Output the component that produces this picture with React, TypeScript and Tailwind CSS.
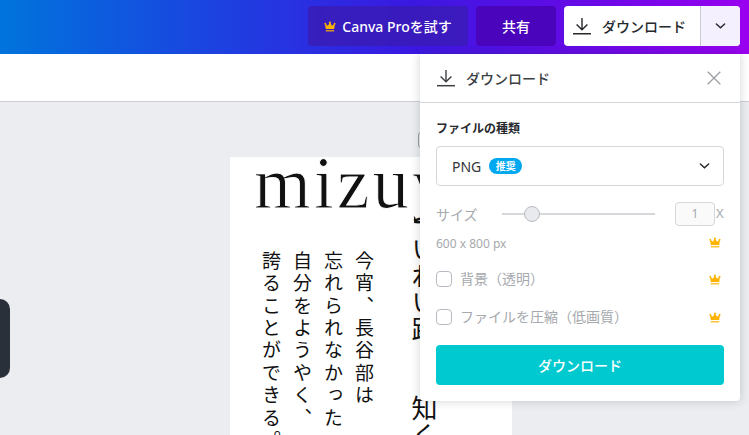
import React from 'react';

const jp = '[font-family:"Noto_Sans","Noto_Sans_CJK_JP",sans-serif]';

const DownloadIcon = ({ className }: { className?: string }) => (
  <svg viewBox="0 0 18 18" className={className} fill="none" stroke="currentColor" strokeWidth="1.4">
    <path d="M9 1v11.5M3.6 7.4 9 12.8l5.4-5.4" />
    <path d="M0 16.7h18" strokeWidth="1.5" />
  </svg>
);

const Chevron = ({ className }: { className?: string }) => (
  <svg viewBox="0 0 12 8" className={className} fill="none" stroke="currentColor" strokeWidth="1.6" strokeLinecap="round">
    <path d="M1.5 1.8 6 6l4.5-4.2" />
  </svg>
);

const Crown = () => (
  <svg viewBox="0 0 12 11" className="h-[11px] w-3 shrink-0" fill="#fdb300">
    <path d="M6 0.6a1 1 0 0 1 .6 1.8l1.5 2.3 1.7-1.5a.95.95 0 1 1 1 .5L10.2 8H1.8L1.1 3.7a.95.95 0 1 1 1-.5l1.7 1.5 1.5-2.3A1 1 0 0 1 6 .6z" />
    <path d="M1.8 9.2h8.4v1.2H1.8z" />
  </svg>
);

const CheckRow = ({ label }: { label: string }) => (
  <div className="flex h-4 items-center">
    <span className="h-4 w-4 shrink-0 rounded-[4px] border border-[#b8bcc2] bg-white" />
    <span className="ml-2 flex-1 text-[14px] leading-none text-[#a6a9ad]">{label}</span>
    <span className="mr-[3px]">
      <Crown />
    </span>
  </div>
);

const VerticalLine = ({ text }: { text: string }) => (
  <div className='mt-[41px] h-[260px] w-[31px] shrink-0 text-[19px] leading-[31px] tracking-[3.4px] text-[#111] [writing-mode:vertical-rl] [font-family:"Noto_Sans_CJK_JP",sans-serif]'>
    {text}
  </div>
);

export default function App() {
  return (
    <div className={`relative flex h-[435px] w-[749px] flex-col overflow-hidden bg-[#ebedf0] ${jp}`}>
      {/* top bar */}
      <header className="flex h-[54px] shrink-0 items-start justify-end gap-2 bg-[linear-gradient(90deg,#0074dc_0%,#1a45e0_27%,#3a18e2_55%,#6a08e6_80%,#9a00f0_100%)] pr-[9px] pt-[6px]">
        <button className="flex h-10 w-[160px] items-center justify-center gap-[6px] rounded bg-[#3a1cb4]/80 text-[14px] font-medium text-white">
          <Crown />
          Canva Proを試す
        </button>
        <button className="h-10 w-20 rounded bg-[#4a04bc] text-[14px] font-medium text-white">共有</button>
        <div className="flex h-10 w-[176px] overflow-hidden rounded bg-white text-[#26282c]">
          <div className="flex flex-1 items-center border-r border-[#c9ccd1] pl-[9px]">
            <DownloadIcon className="h-[18px] w-[18px]" />
            <span className="ml-[11px] text-[14px] font-medium">ダウンロード</span>
          </div>
          <div className="flex w-[39px] items-center justify-center bg-[#f5f0fe]">
            <Chevron className="h-2 w-[11px]" />
          </div>
        </div>
      </header>

      {/* toolbar */}
      <div className="h-12 shrink-0 border-b border-[#ccced3] bg-white" />

      {/* canvas */}
      <main className="min-h-0 flex-1 pl-[230px] pt-[55px]">
        <div className="h-[400px] w-[282px] overflow-hidden bg-white pl-[24px]">
          <div className="h-[53px] whitespace-nowrap text-[73px] leading-[53px] tracking-[3px] text-[#111] [font-family:'Liberation_Serif',serif] [-webkit-text-stroke:0.9px_white]">
            mizuya
          </div>
          <div className="ml-[2px] flex items-start">
            <VerticalLine text="誇ることができる。" />
            <VerticalLine text="自分をようやく、" />
            <VerticalLine text="忘れられなかった" />
            <VerticalLine text="今宵、長谷部は" />
            <div className='ml-[29px] h-[260px] w-[30px] shrink-0 text-[26px] leading-[30px] tracking-[0.5px] text-[#111] [writing-mode:vertical-rl] [font-family:"Noto_Sans_CJK_JP",sans-serif]'>
              ついれい路　、知く
            </div>
          </div>
        </div>
      </main>

      {/* left tab */}
      <div className="absolute left-0 top-[299px] h-[79px] w-[10px] rounded-r-xl bg-[#293039]" />

      {/* small handle peeking out behind the menu */}
      <div className="absolute left-[418px] top-[132px] h-[16px] w-4 rounded-[3px] border border-[#9a9da3]" />

      {/* download menu */}
      <section className="absolute left-[420px] top-[54px] w-[320px] rounded-b bg-white pb-4 shadow-[0_0_10px_rgba(40,50,60,0.22)]">
        <div className="flex h-[49px] items-center border-b border-[#d5d7da] pl-[17px] pr-[19px] text-[#3c3f44]">
          <DownloadIcon className="h-[18px] w-[18px]" />
          <span className="ml-[11px] flex-1 text-[14px] font-medium">ダウンロード</span>
          <svg viewBox="0 0 14 14" className="h-[14px] w-[14px] text-[#9b9ea3]" fill="none" stroke="currentColor" strokeWidth="1.3">
            <path d="M.7.7l12.6 12.6M13.3.7.7 13.3" />
          </svg>
        </div>
        <div className="px-4">
          <div className="mt-[18px] text-[12px] font-bold leading-[16px] text-[#26282c]">ファイルの種類</div>
          <div className="mt-[9px] flex h-10 items-center rounded border border-[#d5d7da] pl-[15px] pr-[13px]">
            <span className="text-[14px] text-[#33363a]">PNG</span>
            <span className="ml-2 flex h-4 w-[33px] items-center justify-center rounded-full bg-[#00a8f0] text-[10px] font-bold text-white">推奨</span>
            <Chevron className="ml-auto h-2 w-[11px] text-[#26282c]" />
          </div>
          <div className="mt-4 flex h-6 items-center">
            <span className="w-[66px] shrink-0 text-[14px] text-[#a6a9ad]">サイズ</span>
            <div className="relative h-[2px] w-[153px] shrink-0 bg-[#d5d7da]">
              <span className="absolute left-[22px] top-[-7px] h-4 w-4 rounded-full border border-[#b8bcc2] bg-[#e8eaee]" />
            </div>
            <span className="ml-5 flex h-6 w-10 shrink-0 items-center justify-center rounded border border-[#d5d7da] bg-[#fafafa] text-[12px] text-[#a6a9ad]">1</span>
            <span className="shrink-0 pl-[1px] text-[13px] text-[#a6a9ad]">X</span>
          </div>
          <div className="mt-[10px] flex h-4 items-center justify-between pr-[3px]">
            <span className="text-[12px] text-[#a6a9ad]">600 x 800 px</span>
            <span className="-mt-[3px]">
              <Crown />
            </span>
          </div>
          <div className="mt-[19px] flex flex-col gap-[22px]">
            <CheckRow label="背景（透明）" />
            <CheckRow label="ファイルを圧縮（低画質）" />
          </div>
          <button className="mt-5 h-10 w-full rounded bg-[#00c9d0] text-[14px] font-medium text-white">ダウンロード</button>
        </div>
      </section>
    </div>
  );
}
